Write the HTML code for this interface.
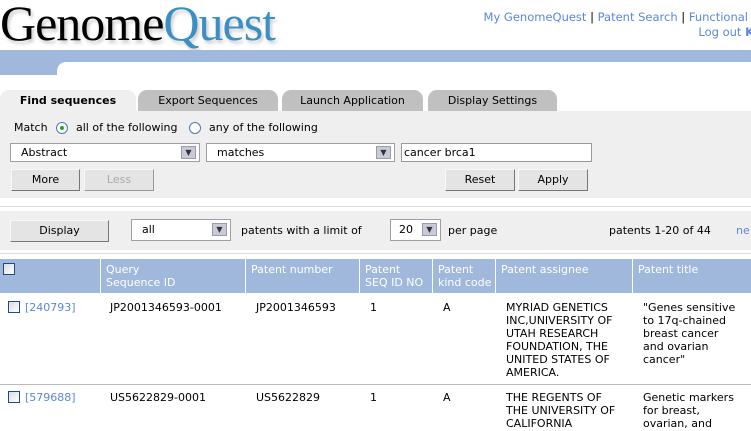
<!DOCTYPE html>
<html><head><meta charset="utf-8"><style>
*{margin:0;padding:0;box-sizing:border-box}
body{width:751px;height:431px;overflow:hidden;background:#fff;font-family:"DejaVu Sans","Liberation Sans",sans-serif;font-size:11px;color:#000;position:relative}
.a{position:absolute;white-space:nowrap}
.logo{left:0;top:-6px;font-family:"Liberation Serif",serif;font-size:50px;letter-spacing:-1px;text-shadow:2px 3px 3px rgba(0,0,0,.2)}
.lnk{color:#5b86e0}
.tab{position:absolute;top:90px;height:21px;background:#c0c0c0;border-radius:9px 9px 0 0;text-align:center;line-height:22px;font-size:11px}
.panel{position:absolute;left:0;width:751px;background:#efefef}
.sel{position:absolute;height:19px;background:#fff;border:1px solid #a0a0a0;padding-left:10px;line-height:17px}
.sel i{position:absolute;right:3px;top:2px;width:15px;height:13px;background:#c8cad8;border:1px solid #9a9ab0;font-style:normal;font-size:8px;line-height:12px;text-align:center;color:#333}
.btn{position:absolute;height:22px;background:#e4e4e4;border:1px solid;border-color:#f8f8f8 #777 #777 #f8f8f8;text-align:center;line-height:20px}
.radio{position:absolute;width:12px;height:12px;border:1px solid #5577aa;border-radius:50%;background:#fff}
.hd{position:absolute;top:259px;height:34px;background:#a0b8dc;color:#fff;padding:4px 0 0 5px;line-height:13px;white-space:normal}
.cb{position:absolute;width:12px;height:12px;border:1px solid #1c4a8a;background:linear-gradient(135deg,#ddd,#fff)}
.c{position:absolute;line-height:13px;font-size:11px}
</style></head><body>
<div class="a logo"><span>Genome</span><span style="color:#3a8fc4">Quest</span></div>
<div class="a" style="right:3px;top:10px;font-size:11.5px"><span class="lnk">My GenomeQuest</span> | <span class="lnk">Patent Search</span> | <span class="lnk">Functional</span></div>
<div class="a" style="right:-3px;top:25px;font-size:11.5px"><span class="lnk">Log out <b>K</b></span></div>

<div class="a" style="left:0;top:50px;width:751px;height:25px;background:#a0b8dc"></div>
<div class="a" style="left:57px;top:62px;width:700px;height:14px;background:#fff;border-top-left-radius:9px"></div>

<div class="tab" style="left:0;width:136px;background:#efefef;font-weight:bold">Find sequences</div>
<div class="tab" style="left:138px;width:140px">Export Sequences</div>
<div class="tab" style="left:282px;width:141px">Launch Application</div>
<div class="tab" style="left:428px;width:129px">Display Settings</div>

<div class="panel" style="top:111px;height:87px"></div>
<div class="a" style="left:14px;top:121px">Match</div>
<div class="radio" style="left:56px;top:122px"><div style="position:absolute;left:3px;top:3px;width:4px;height:4px;border-radius:50%;background:#2a2"></div></div>
<div class="a" style="left:76px;top:121px">all of the following</div>
<div class="radio" style="left:189px;top:122px"></div>
<div class="a" style="left:209px;top:121px">any of the following</div>

<div class="sel" style="left:10px;top:143px;width:190px">Abstract<i>&#9660;</i></div>
<div class="sel" style="left:206px;top:143px;width:189px">matches<i>&#9660;</i></div>
<div class="sel" style="left:401px;top:143px;width:191px;padding-left:2px;border-color:#999">cancer brca1</div>

<div class="btn" style="left:11px;top:169px;width:69px">More</div>
<div class="btn" style="left:84px;top:169px;width:70px;color:#aaa;border-color:#f8f8f8 #999 #999 #f8f8f8">Less</div>
<div class="btn" style="left:445px;top:169px;width:70px">Reset</div>
<div class="btn" style="left:518px;top:169px;width:70px">Apply</div>

<div class="a" style="left:0;top:206px;width:751px;height:1px;background:#ddd"></div>
<div class="panel" style="top:211px;height:39px"></div>
<div class="a" style="left:0;top:253px;width:751px;height:1px;background:#ddd"></div>
<div class="btn" style="left:10px;top:220px;width:99px">Display</div>
<div class="sel" style="left:131px;top:219px;width:100px;height:22px;line-height:20px">all<i style="top:3px">&#9660;</i></div>
<div class="a" style="left:241px;top:224px">patents with a limit of</div>
<div class="sel" style="left:390px;top:219px;width:51px;height:22px;line-height:20px;padding-left:8px">20<i style="top:3px">&#9660;</i></div>
<div class="a" style="left:448px;top:224px">per page</div>
<div class="a" style="left:609px;top:224px">patents 1-20 of 44</div>
<div class="a lnk" style="left:736px;top:224px">ne</div>

<div class="hd" style="left:0;width:100px"></div>
<div class="cb" style="left:3px;top:263px"></div>
<div class="hd" style="left:101px;width:144px">Query<br>Sequence ID</div>
<div class="hd" style="left:246px;width:113px">Patent number</div>
<div class="hd" style="left:360px;width:72px">Patent<br>SEQ ID NO</div>
<div class="hd" style="left:433px;width:62px">Patent<br>kind code</div>
<div class="hd" style="left:496px;width:136px">Patent assignee</div>
<div class="hd" style="left:633px;width:118px">Patent title</div>

<div class="cb" style="left:8px;top:301px"></div>
<div class="c lnk" style="left:25px;top:301px">[240793]</div>
<div class="c" style="left:110px;top:301px">JP2001346593-0001</div>
<div class="c" style="left:256px;top:301px">JP2001346593</div>
<div class="c" style="left:370px;top:301px">1</div>
<div class="c" style="left:443px;top:301px">A</div>
<div class="c" style="left:506px;top:301px">MYRIAD GENETICS<br>INC,UNIVERSITY OF<br>UTAH RESEARCH<br>FOUNDATION, THE<br>UNITED STATES OF<br>AMERICA.</div>
<div class="c" style="left:643px;top:301px">"Genes sensitive<br>to 17q-chained<br>breast cancer<br>and ovarian<br>cancer"</div>

<div class="a" style="left:0;top:384px;width:751px;height:1px;background:#bbb"></div>

<div class="cb" style="left:8px;top:391px"></div>
<div class="c lnk" style="left:25px;top:391px">[579688]</div>
<div class="c" style="left:110px;top:391px">US5622829-0001</div>
<div class="c" style="left:256px;top:391px">US5622829</div>
<div class="c" style="left:370px;top:391px">1</div>
<div class="c" style="left:443px;top:391px">A</div>
<div class="c" style="left:506px;top:391px">THE REGENTS OF<br>THE UNIVERSITY OF<br>CALIFORNIA</div>
<div class="c" style="left:643px;top:391px">Genetic markers<br>for breast,<br>ovarian, and</div>
</body></html>
